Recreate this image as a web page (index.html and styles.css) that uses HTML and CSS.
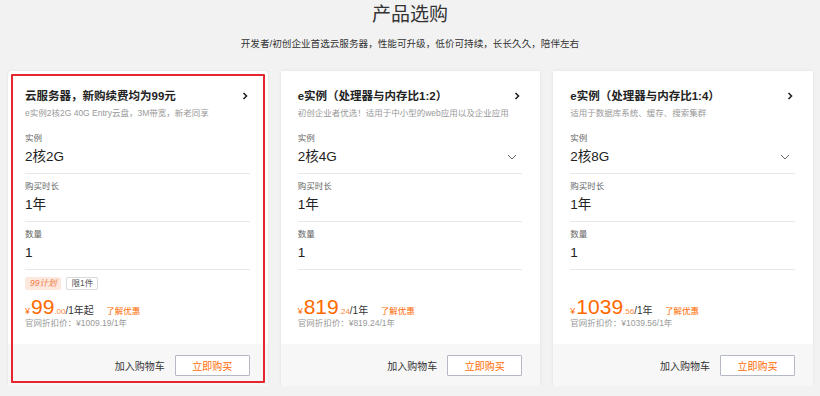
FILE: index.html
```html
<!DOCTYPE html>
<html lang="zh-CN">
<head>
    <meta charset="UTF-8">
    <meta name="viewport" content="width=device-width, initial-scale=1.0">
    <title>产品选购</title>
    <link rel="stylesheet" href="styles.css">
</head>
<body>
    <h1 class="title">产品选购</h1>
    <p class="subtitle">开发者/初创企业首选云服务器，性能可升级，低价可持续，长长久久，陪伴左右</p>

    <div class="cards">
        <!-- 99 计划 -->
        <div class="card active">
            <div class="card-body">
                <div class="card-head">
                    <span class="card-name">云服务器，新购续费均为99元</span>
                    <svg class="arrow" width="6" height="8" viewBox="0 0 6 8"><path d="M1.5 1l3 3-3 3" fill="none" stroke="#222" stroke-width="1.6"/></svg>
                </div>
                <div class="card-desc">e实例2核2G 40G Entry云盘，3M带宽，新老同享</div>

                <div class="field">
                    <div class="label">实例</div>
                    <div class="value">2核2G</div>
                </div>
                <div class="field">
                    <div class="label">购买时长</div>
                    <div class="value">1年</div>
                </div>
                <div class="field">
                    <div class="label">数量</div>
                    <div class="value">1</div>
                </div>

                <div class="tags">
                    <span class="tag hot">99计划</span>
                    <span class="tag">限1件</span>
                </div>
                <div class="price">
                    <span class="yen">¥</span><span class="int">99</span><span class="dec">.00</span><span class="unit">/1年起</span>
                    <a class="more">了解优惠</a>
                </div>
                <div class="origin">官网折扣价：¥1009.19/1年</div>
            </div>
            <div class="card-foot">
                <span class="cart">加入购物车</span>
                <button class="buy">立即购买</button>
            </div>
        </div>

        <!-- 1:2 -->
        <div class="card">
            <div class="card-body">
                <div class="card-head">
                    <span class="card-name">e实例（处理器与内存比1:2）</span>
                    <svg class="arrow" width="6" height="8" viewBox="0 0 6 8"><path d="M1.5 1l3 3-3 3" fill="none" stroke="#222" stroke-width="1.6"/></svg>
                </div>
                <div class="card-desc">初创企业者优选！适用于中小型的web应用以及企业应用</div>

                <div class="field">
                    <div class="label">实例</div>
                    <div class="value">2核4G
                        <svg class="down" width="10" height="6" viewBox="0 0 10 6"><path d="M1 1l4 4 4-4" fill="none" stroke="#666" stroke-width="1"/></svg>
                    </div>
                </div>
                <div class="field">
                    <div class="label">购买时长</div>
                    <div class="value">1年</div>
                </div>
                <div class="field">
                    <div class="label">数量</div>
                    <div class="value">1</div>
                </div>

                <div class="tags"></div>
                <div class="price">
                    <span class="yen">¥</span><span class="int">819</span><span class="dec">.24</span><span class="unit">/1年</span>
                    <a class="more">了解优惠</a>
                </div>
                <div class="origin">官网折扣价：¥819.24/1年</div>
            </div>
            <div class="card-foot">
                <span class="cart">加入购物车</span>
                <button class="buy">立即购买</button>
            </div>
        </div>

        <!-- 1:4 -->
        <div class="card">
            <div class="card-body">
                <div class="card-head">
                    <span class="card-name">e实例（处理器与内存比1:4）</span>
                    <svg class="arrow" width="6" height="8" viewBox="0 0 6 8"><path d="M1.5 1l3 3-3 3" fill="none" stroke="#222" stroke-width="1.6"/></svg>
                </div>
                <div class="card-desc">适用于数据库系统、缓存、搜索集群</div>

                <div class="field">
                    <div class="label">实例</div>
                    <div class="value">2核8G
                        <svg class="down" width="10" height="6" viewBox="0 0 10 6"><path d="M1 1l4 4 4-4" fill="none" stroke="#666" stroke-width="1"/></svg>
                    </div>
                </div>
                <div class="field">
                    <div class="label">购买时长</div>
                    <div class="value">1年</div>
                </div>
                <div class="field">
                    <div class="label">数量</div>
                    <div class="value">1</div>
                </div>

                <div class="tags"></div>
                <div class="price">
                    <span class="yen">¥</span><span class="int">1039</span><span class="dec">.56</span><span class="unit">/1年</span>
                    <a class="more">了解优惠</a>
                </div>
                <div class="origin">官网折扣价：¥1039.56/1年</div>
            </div>
            <div class="card-foot">
                <span class="cart">加入购物车</span>
                <button class="buy">立即购买</button>
            </div>
        </div>
    </div>
</body>
</html>
```

FILE: styles.css
```css
body {
    margin: 0;
    background: #f2f2f2;
    color: #333;
    font-family: "Liberation Sans", "Noto Sans CJK SC", sans-serif;
}
.title {
    margin: 0;
    padding-top: 3px;
    font-size: 19px;
    line-height: 24px;
    font-weight: 400;
    text-align: center;
    color: #333;
}
.subtitle {
    margin: 10px 0 20px;
    font-size: 9.6px;
    line-height: 14px;
    text-align: center;
    color: #333;
}
.cards {
    display: grid;
    grid-template-columns: repeat(3, 1fr);
    gap: 13px;
    padding: 0 7px 0 8px;
}
.card {
    height: 315px;
    background: #fff;
    box-shadow: 0 0 3px rgba(0, 0, 0, 0.08);
    display: flex;
    flex-direction: column;
}
.card.active {
    outline: 2px solid #e5262e;
    outline-offset: -5px;
    border-radius: 4px;
}
.card-body {
    flex: 1;
    padding: 18px 18px 0 17px;
}
.card-head {
    display: flex;
    justify-content: space-between;
    align-items: center;
    height: 14px;
}
.card-name {
    font-size: 11.5px;
    line-height: 14px;
    font-weight: 600;
    color: #222;
}
.arrow {
    margin-right: 2px;
}
.card-desc {
    margin-top: 4px;
    font-size: 8.5px;
    line-height: 12px;
    color: #999;
    white-space: nowrap;
}
.field {
    padding: 6px 0 7px;
    border-bottom: 1px solid #e8e8e8;
}
.card-desc + .field {
    padding-top: 13px;
}
.label {
    font-size: 8.5px;
    line-height: 12px;
    color: #666;
}
.value {
    margin-top: 4px;
    font-size: 13.5px;
    line-height: 18px;
    color: #222;
    display: flex;
    justify-content: space-between;
    align-items: center;
}
.down {
    margin-right: 5px;
}
.tags {
    margin-top: 7px;
    height: 13px;
    display: flex;
    gap: 5px;
}
.tag {
    padding: 0 4px;
    font-size: 8.5px;
    line-height: 11px;
    border: 1px solid #d9d9d9;
    border-radius: 2px;
    color: #555;
}
.tag.hot {
    border-color: #fde8de;
    background: #fde8de;
    color: #f07a45;
    font-style: italic;
}
.price {
    margin-top: 6px;
    height: 22px;
    line-height: 22px;
    white-space: nowrap;
}
.yen {
    font-size: 9px;
    color: #ff6a00;
    margin-right: 1px;
}
.int {
    font-size: 21px;
    color: #ff6a00;
}
.dec {
    font-size: 8px;
    color: #ff8a40;
}
.unit {
    font-size: 10px;
    color: #333;
}
.more {
    margin-left: 8px;
    font-size: 8.5px;
    color: #ff6a00;
}
.origin {
    margin-top: -1px;
    font-size: 8.5px;
    line-height: 12px;
    color: #999;
}
.card-foot {
    height: 42px;
    background: #f7f7f7;
    display: flex;
    justify-content: flex-end;
    align-items: center;
    gap: 10px;
    padding: 0 18px;
}
.cart {
    font-size: 10px;
    color: #333;
}
.buy {
    width: 75px;
    height: 21px;
    padding: 0;
    background: #fff;
    border: 1px solid #b4b9c4;
    border-radius: 1px;
    color: #ff6a00;
    font-family: inherit;
    font-size: 10px;
    cursor: pointer;
}
```
